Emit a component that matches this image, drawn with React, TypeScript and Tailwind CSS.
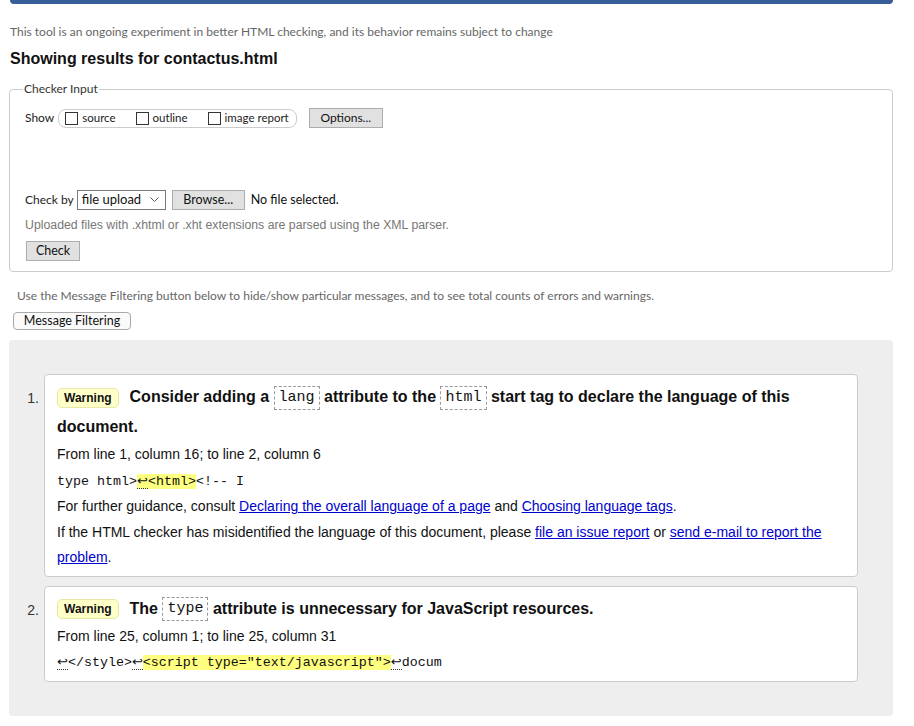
import React from "react";

const ui = "font-['Lato','Open_Sans',sans-serif]";
const arial = "font-['Liberation_Sans',Arial,sans-serif]";
const mono = "font-['Liberation_Mono','Courier_New',monospace]";

function Code({ children }: { children: React.ReactNode }) {
  return (
    <code
      className={`${mono} inline-block border border-dashed border-[#999] px-[4px] align-middle text-[15px] font-normal leading-[22px]`}
    >
      {children}
    </code>
  );
}

function Badge() {
  return (
    <span className="mr-[11px] inline-block rounded-[5px] border border-[#e8e6a8] bg-[#ffffc8] px-[6px] align-middle text-[12px] font-bold leading-[18px]">
      Warning
    </span>
  );
}

function Ret() {
  return (
    <span className="border-b border-dotted border-[#333] font-['DejaVu_Sans',sans-serif] text-[13px]">
      ↩
    </span>
  );
}

function Hi({ children }: { children: React.ReactNode }) {
  return <mark className="bg-[#ffff80] text-inherit">{children}</mark>;
}

function A({ children }: { children: React.ReactNode }) {
  return <a className="text-[#0000cc] underline">{children}</a>;
}

function Message({
  n,
  children,
}: {
  n: number;
  children: React.ReactNode;
}) {
  return (
    <li className="flex">
      <span className="w-[35px] shrink-0 pr-[5px] pt-[9px] text-right text-[14px] leading-[30px] text-[#333]">
        {n}.
      </span>
      <div className="flex-1 rounded-[4px] border border-[#ccc] bg-white px-[12px] pb-[5px] pt-[7px]">
        {children}
      </div>
    </li>
  );
}

export default function App() {
  return (
    <div className={`${arial} min-h-[726px] bg-white pl-[9px] pr-[21px] text-[#111]`}>
      <div className="ml-[1px] h-[4px] rounded-b-[5px] bg-[#375e97]" />

      <p className={`${ui} ml-[1px] mt-[20px] text-[12px] leading-[16px] text-[#666]`}>
        This tool is an ongoing experiment in better HTML checking, and its behavior remains
        subject to change
      </p>
      <h2 className="ml-[1px] mt-[9px] text-[16px] font-bold leading-[20px] text-[#111]">
        Showing results for contactus.html
      </h2>

      <fieldset className={`${ui} mt-[12px] rounded-[4px] border border-[#ccc] pb-[10px] pl-[15px] pr-[15px]`}>
        <legend className="ml-[-2px] px-[1px] text-[12px] leading-[16px] text-[#333]">
          Checker Input
        </legend>

        <div className="mt-[11px] flex items-center text-[12px] text-[#222]">
          <span className="mr-[4px]">Show</span>
          <div className="flex h-[19px] items-center gap-[20px] rounded-[8px] border border-[#ccc] pl-[6px] pr-[7px] text-[11.5px]">
            <label className="flex items-center gap-[4px]">
              <span className="h-[13px] w-[13px] border border-[#333] bg-white" />
              source
            </label>
            <label className="flex items-center gap-[4px]">
              <span className="h-[13px] w-[13px] border border-[#333] bg-white" />
              outline
            </label>
            <label className="flex items-center gap-[4px]">
              <span className="h-[13px] w-[13px] border border-[#333] bg-white" />
              image report
            </label>
          </div>
          <button className="ml-[12px] h-[20px] w-[74px] border border-[#adadad] bg-[#e1e1e1] text-[12px] text-[#111]">
            Options...
          </button>
        </div>

        <div className="mt-[62px] flex items-center text-[12px] text-[#222]">
          <span className="mr-[3px]">Check by</span>
          <div className="flex h-[20px] w-[89px] items-center justify-between border border-[#7a7a7a] pl-[4px] pr-[6px] text-[13px] text-[#111]">
            <span>file upload</span>
            <svg width="9" height="6" viewBox="0 0 9 6" fill="none">
              <path d="M0.5 0.5 L4.5 4.5 L8.5 0.5" stroke="#555" strokeWidth="1" />
            </svg>
          </div>
          <button className="ml-[6px] h-[20px] w-[73px] border border-[#adadad] bg-[#e1e1e1] text-[12.5px] text-[#111]">
            Browse...
          </button>
          <span className="ml-[6px] text-[12.5px] text-[#111]">No file selected.</span>
        </div>

        <p className={`${arial} mt-[7px] text-[12.3px] leading-[16px] text-[#777]`}>
          Uploaded files with .xhtml or .xht extensions are parsed using the XML parser.
        </p>

        <button className="ml-[1px] mt-[8px] block h-[20px] w-[54px] border border-[#adadad] bg-[#e1e1e1] text-[12.5px] text-[#111]">
          Check
        </button>
      </fieldset>

      <p className={`${ui} ml-[8px] mt-[16px] text-[12px] leading-[16px] text-[#666]`}>
        Use the Message Filtering button below to hide/show particular messages, and to see total
        counts of errors and warnings.
      </p>
      <button
        className={`${ui} ml-[4px] mt-[8px] block h-[18px] w-[118px] rounded-[4px] border border-[#aaa] bg-[#fafafa] text-[12.5px] leading-[16px] text-[#111]`}
      >
        Message Filtering
      </button>

      <div className="mt-[10px] rounded-[3px] bg-[#eeeeee] pb-[34px] pl-0 pr-[35px] pt-[34px]">
        <ol className="flex flex-col gap-[9px]">
          <Message n={1}>
            <h3 className="text-[16px] font-bold leading-[30px] text-[#111]">
              <Badge />
              Consider adding a <Code>lang</Code> attribute to the <Code>html</Code> start tag to
              declare the language of this document.
            </h3>
            <p className="text-[14px] leading-[25.5px]">From line 1, column 16; to line 2, column 6</p>
            <p className={`${mono} text-[13.33px] leading-[25.5px]`}>
              type html&gt;
              <Hi>
                <Ret />
                &lt;html&gt;
              </Hi>
              &lt;!-- I
            </p>
            <p className="text-[14px] leading-[25.5px]">
              For further guidance, consult <A>Declaring the overall language of a page</A> and{" "}
              <A>Choosing language tags</A>.
            </p>
            <p className="text-[14px] leading-[25.5px]">
              If the HTML checker has misidentified the language of this document, please{" "}
              <A>file an issue report</A> or <A>send e-mail to report the problem</A>.
            </p>
          </Message>

          <Message n={2}>
            <h3 className="text-[16px] font-bold leading-[30px] text-[#111]">
              <Badge />
              The <Code>type</Code> attribute is unnecessary for JavaScript resources.
            </h3>
            <p className="text-[14px] leading-[25.5px]">
              From line 25, column 1; to line 25, column 31
            </p>
            <p className={`${mono} text-[13.33px] leading-[25.5px]`}>
              <Ret />
              &lt;/style&gt;
              <Ret />
              <Hi>&lt;script type="text/javascript"&gt;</Hi>
              <Ret />
              docum
            </p>
          </Message>
        </ol>
      </div>
    </div>
  );
}
